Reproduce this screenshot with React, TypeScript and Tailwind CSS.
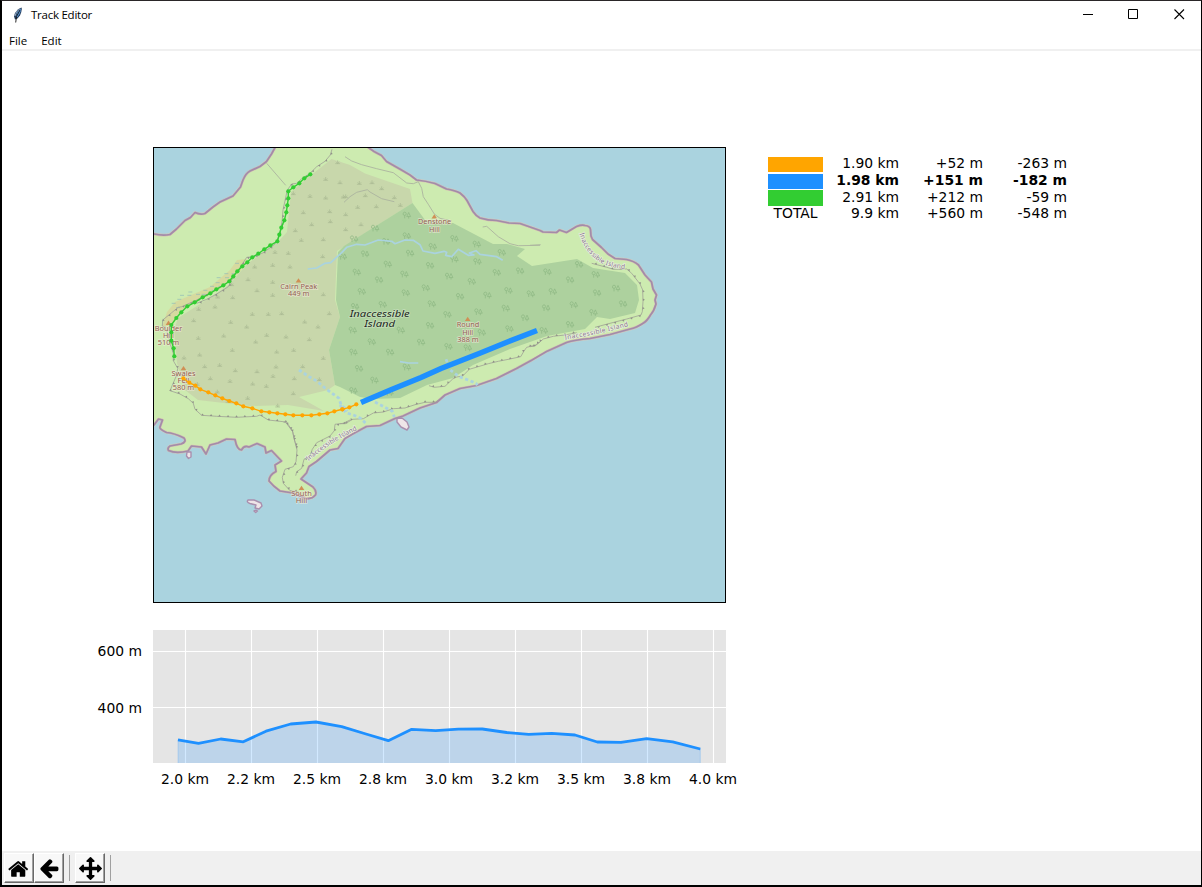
import React from 'react';

type Pt = [number, number];

const pts = (s: string): Pt[] => s.split(' ').map((p) => p.split(',').map(Number) as Pt);

// Marks are stored per survey sheet: three units per map pixel, relative to the sheet's corner.
const sheet = (ox: number, oy: number, s: string): Pt[] =>
  pts(s).map(([x, y]) => [ox + x / 3, oy + y / 3]);

const line = (list: Pt[]) => list.map(([x, y]) => `${x.toFixed(1)},${y.toFixed(1)}`).join(' ');

// Evenly spaced positions along a polyline, each with the direction of its stretch.
const along = (list: Pt[], step: number) => {
  const out: { x: number; y: number; angle: number }[] = [];
  let next = step / 2;
  let done = 0;
  for (let i = 1; i < list.length; i++) {
    const [ax, ay] = list[i - 1];
    const [bx, by] = list[i];
    const len = Math.hypot(bx - ax, by - ay);
    while (next <= done + len) {
      const t = (next - done) / len;
      out.push({ x: ax + (bx - ax) * t, y: ay + (by - ay) * t, angle: (Math.atan2(by - ay, bx - ax) * 180) / Math.PI });
      next += step;
    }
    done += len;
  }
  return out;
};

const ISLAND =
  'M150,234 154,234 Q163,236 170,234.5 L176.5,229 185,220.5 190.5,217.5 195,212.5 Q200,215 205,213.5 L213,207 220,202 233,196 240.5,187 243,180 Q246,173 250,171 L260,166.5 266.5,161.5 271.5,154 277,144 L363,144 369,148 374,151.5 381.5,155.5 386.5,161.5 401.5,170 410,175 416.5,180 Q426,181 435,183.5 L446.5,189 Q455,190.500 460,193 Q465,197 467,200.500 L473,211.500 Q476,216 480,218 Q488,220.500 496.500,220.500 L509,223 520,223.500 540,230.500 543,232 556.500,232.500 559.500,230 566.500,232.500 576.500,226.500 Q582,224.500 585,225.500 Q590,226 590.500,229.500 L591,236 592.500,239.500 601.500,247.500 608,254 615,258.500 626.500,259.500 Q634,261 638.500,265 L645,275 651.500,282 653,289 656.500,295 655,300 656,304 Q654,311 650.500,315 Q647,321 643.500,323 Q636,328 630,329 L610,334.500 590,338.500 Q574,340 566.500,342.500 L546.500,351.500 532,360 516.500,368.500 496.500,378.500 476.500,385.500 460,388.500 445,395 436.500,402.500 420,408 403,416 395,418.500 380,425.500 366.500,426.500 353.500,433.500 345,438.500 338,448.500 330,450 316.500,461.500 309,466.500 306.500,473 301,479 313,487 Q317,491 315.500,495 Q311,500 305,498 L293,493 280,491 Q273,486 269,481 Q269,475 276,471.500 L275,465 281.500,461 271.500,450.500 266,453 265,447 257,443.500 249,447 Q244,445 241.500,450 Q237,450 235,439.500 L226.500,439 218,443 210,445 206,454 201.500,447 191.500,446 188,451 Q176,454 168.500,450.500 Q167,448 170,446 L181,444 Q187,442 184,438 Q174,433 166.500,432.500 Q159,429 160,427 L162.500,420 158.500,419 154,425 150,425 Z';

const SCRUB =
  '331.5,159 350,165 365,173.5 410,189 412.5,203 337,251 335,300 340,317 329,350 335,385 328,390 299,397 324,411 288,405 250,406 198,400 185,390 177,363 174,330 178,318 208,299 230,284 247,264 277,243 287,232 291,192 310,176';

const FOREST =
  '412.5,203 344,246 338,252 336,300 340,317 329,350 335,385 340,387 360,397 373,399 400,398 427,385 453,378 473,365 510,349 547,336 585,329 597,317 610,319 635,313 639,300 637,285 625,273 593,268 577,259 532,266 517,256 525,249 507,244 493,244 453,223 425,220';

const TREES: Pt[] = [
  ...sheet(340, 140, '200,226 105,265 42,297 138,305 200,288 343,296 278,320 410,313 485,338 75,342 8,350 210,340 343,358 412,365 143,373 270,377 50,397 193,403 327,409 470,398 540,393 117,420 395,425 257,444 65,455 505,452 197,459 442,466 360,470 572,462'),
  ...sheet(340, 290, '45,50 128,44 275,42 497,55 322,74 415,66 555,84 270,107 38,121 182,121 508,117 425,128 95,156 243,157 325,170 383,174 40,187 150,187 57,236 200,232 103,271 40,302 148,308'),
  ...sheet(530, 200, '147,194 52,216 197,224 120,240 258,265 68,275 201,279 279,312 131,315 48,324 190,338 120,374 41,392'),
];

const BUSHES: Pt[] = [
  ...sheet(150, 140, '563,67 527,117 570,127 430,160 480,168 527,173 587,169 460,217 539,214 587,223 485,253 541,244 436,271 587,268 454,300 520,298 375,336 415,339 518,349 314,380 368,375 420,380 294,418 368,426 245,433 321,451 203,470 248,472 368,465 520,463'),
  ...sheet(340, 140, '58,129 96,127 125,145 10,170 76,166 163,172 53,201 109,199 181,195 63,253'),
  ...sheet(150, 290, '146,57 195,50 307,72 355,72 395,70 538,70 131,91 242,96 464,95 504,110 290,110 350,135 408,140 478,148 221,137 145,144 317,155 247,180 380,185 431,180 149,194 520,204 102,203 209,225 164,229 256,241 321,244 378,230 458,229 369,258 508,268 240,273 308,281 433,265 181,265 202,305 349,288 142,282 293,324 430,310 234,333 383,347'),
];

const CLIFFS: Pt[][] = [
  sheet(150, 140, '546,28 541,45 525,64 500,80 480,100 455,116 440,130 425,132 412,150 405,182 399,210 397,237 394,260 385,292 375,312 340,338 310,350 290,352 275,375 250,412 235,440 200,462 170,478 140,490'),
  sheet(150, 290, '180,8 140,30 95,50 85,52 65,68 38,90 37,108 50,120 60,160 70,190 70,212 83,235 80,255 60,302 90,312 115,326 130,340 135,358 155,376 200,379 260,382 320,379 330,375 355,390 400,395 410,396 428,425 432,445 441,475'),
  sheet(150, 400, '400,66 408,68 428,95 432,115 441,150 438,185 430,200 405,208 397,232 400,250 420,272 445,275'),
  sheet(150, 400, '600,60 580,70 555,73 553,92 540,108 500,128 487,148 480,168 462,178 455,205 440,215 437,227'),
  sheet(340, 290, '267,287 283,292 315,289 338,267 350,261 368,258 388,238 445,221 475,214 510,207 542,200 552,183 560,172 585,166 600,156'),
  sheet(340, 290, '0,401 16,401 38,388 70,386 100,369 130,366 160,356 195,354 225,344 255,337 285,337 295,331'),
  sheet(530, 200, '0,440 15,438 25,430 40,417 70,409 105,405 140,398'),
  sheet(530, 200, '185,190 230,202 250,208 290,207 305,220 330,252 338,270 339,305 337,335 333,345 290,357 240,370 195,382'),
];

const PATHS: Pt[][] = [
  sheet(150, 140, '350,70 407,136'),
  sheet(340, 140, '15,50 35,63 65,74 110,86 160,98 200,129 220,131 235,125 245,145 250,170 265,193 283,222 300,235 335,243'),
  sheet(340, 140, '12,187 30,170 50,157 82,149 90,156 125,176 163,185'),
  sheet(340, 140, '428,261 440,259 475,290 510,311 535,317 600,316'),
  sheet(530, 200, '0,136 32,134'),
];

const STREAMS: Pt[][] = [
  sheet(340, 140, '-97,387 -70,384 -45,370 -28,368 -8,350 5,338 20,322 50,313 75,315 115,300 155,304 165,311 195,300 220,301 240,314 249,333 285,340 312,334 320,337 317,346 335,350 355,328 385,346 402,345 388,339 408,332 420,343 470,350 488,361'),
  sheet(340, 290, '180,215 205,219 235,219'),
];

const SEASONAL: Pt[][] = [
  sheet(150, 290, '447,240 480,262 500,273 525,294 545,309 567,325 573,344 592,363'),
  sheet(340, 290, '0,345 18,368 40,375 62,385 80,403'),
  sheet(340, 290, '318,208 331,240 358,260 390,272 408,280 412,286'),
  sheet(340, 290, '105,336 137,353 157,364 163,381'),
];

const GREEN: Pt[] = [
  ...sheet(150, 140, '481,103 463,115 448,130 430,142 415,154 415,175 412,196 409,217 403,241 394,263 388,284 382,304 361,316 343,328 325,341 307,352 292,367 277,379 262,394 250,409 238,424 220,436 199,448 181,460 158,472'),
  ...sheet(150, 290, '134,37 112,49 94,67 79,84 64,105 64,127 64,152 71,175 73,199'),
];

const ORANGE: Pt[] = [
  ...sheet(150, 290, '100,265 118,278 136,287 151,298 175,307 196,316 217,325 238,333 259,340 280,349 307,355 334,364 358,367 382,370 406,373 430,376 457,376 484,376 508,373 532,370 553,364 577,358'),
  ...sheet(340, 290, '7,358 28,352 49,343'),
];

const ELEVATION =
  '178,739.8 198.5,743.4 220.7,739 243.3,741.8 266,731.2 290.7,724 316,722 341.7,726.7 366,734 388.3,740.7 411.7,729.3 435.7,730.7 458.3,729.2 482.3,729 506.7,732.5 528.7,734.4 551.7,733.4 575,735 597.3,742 621,742.3 646.7,738.7 672.7,741.8 700.3,749';

const SEGMENTS = [
  { swatch: 'h-[15px] mt-px bg-[#ffa500]', text: '', cells: ['1.90 km', '+52 m', '-263 m'], row: 'h-[17px]' },
  { swatch: 'h-[15px] mt-px bg-[#1e90ff]', text: '', cells: ['1.98 km', '+151 m', '-182 m'], row: 'h-[17px] font-bold' },
  { swatch: 'h-[16px] bg-[#32cd32]', text: '', cells: ['2.91 km', '+212 m', '-59 m'], row: 'h-4' },
  { swatch: 'h-4 -mt-px', text: 'TOTAL', cells: ['9.9 km', '+560 m', '-548 m'], row: 'h-4' },
];

const X_TICKS = ['2.0 km', '2.2 km', '2.5 km', '2.8 km', '3.0 km', '3.2 km', '3.5 km', '3.8 km', '4.0 km'];

function Label({ x, y, w, children }: { x: number; y: number; w: number; children: string }) {
  return (
    <text
      x={x}
      y={y}
      textLength={w}
      lengthAdjust="spacingAndGlyphs"
      textAnchor="middle"
      fontSize="6.6"
      fill="#935f52"
      stroke="#f3ecdf"
      strokeOpacity="0.6"
      strokeWidth="1.3"
      paintOrder="stroke"
    >
      {children}
    </text>
  );
}

function Peak({ x, y }: { x: number; y: number }) {
  return <path d={`M${x},${y - 2.3} l2.8,4.4 h-5.6 z`} fill="#d08f55" />;
}

function Cliff({ points }: { points: Pt[] }) {
  return (
    <g fill="none" stroke="#9fa195">
      <polyline points={line(points)} strokeWidth="0.8" />
      {along(points, 8.5).map((p, i) => (
        <path
          key={i}
          d="M-1.300,0 h2.600 l-1.300,-2 z"
          transform={`translate(${p.x.toFixed(1)} ${p.y.toFixed(1)}) rotate(${p.angle.toFixed(0)})`}
          fill="#8f9188"
          stroke="none"
        />
      ))}
    </g>
  );
}

function Track({ points, color }: { points: Pt[]; color: string }) {
  return (
    <g>
      <polyline points={line(points)} fill="none" stroke={color} strokeWidth="1.4" />
      {points.map(([x, y], i) => (
        <circle key={i} cx={x} cy={y} r="2.1" fill={color} />
      ))}
    </g>
  );
}

function IslandMap() {
  return (
    <svg className="block h-[456px] w-[573px]" viewBox="153 147 573 456" fontFamily="'Noto Sans', sans-serif">
      <defs>
        <path id="east-label" d="M579.500,233.500 Q583,247 594,258 Q605,267.500 627,269" />
        <path id="south-label" d="M565,339.500 Q598,335 632,325" />
        <path id="bay-label" d="M308.500,461 Q329,443 359,429" />
        <clipPath id="island-area">
          <path d={ISLAND} />
        </clipPath>
      </defs>
      <rect x="153" y="147" width="573" height="456" fill="#aad3df" />
      <path d={ISLAND} fill="#cdebb0" />
      <g clipPath="url(#island-area)">
        <path d="M175,302 L210,287 230,270 237,260 247,259 240,272 222,288 190,304 179,315 172,325 162,327 167,312z" fill="#d6da9f" />
        <polygon points={SCRUB} fill="#c8d7ab" />
        <polygon points={FOREST} fill="#add19e" />
      </g>
      <g stroke="#94bcb8" strokeWidth="0.7">
        {sheet(150, 140, '255,370 223,401 245,401 200,413 225,413 197,428 180,439 205,439 160,451 185,451 138,463 155,463').map(([x, y], i) => (
          <path key={i} d={`M${x},${y} h4`} />
        ))}
        {sheet(150, 290, '115,6 90,16 112,16 82,28 65,40 78,53').map(([x, y], i) => (
          <path key={i} d={`M${x},${y} h4`} />
        ))}
      </g>
      <path d={ISLAND} fill="none" stroke="#f0d9b6" strokeOpacity="0.6" strokeWidth="3" strokeLinejoin="round" />
      <path d={ISLAND} fill="none" stroke="#a48ba9" strokeOpacity="0.35" strokeWidth="2.600" strokeLinejoin="round" />
      <path d={ISLAND} fill="none" stroke="#a48ba9" strokeWidth="1.7" strokeLinejoin="round" />
      <g fill="#eee5e8" stroke="#a98fae" strokeWidth="1.4" strokeLinejoin="round">
        <path d="M397,418.500 L402,418 407,422 409,427 407,430 401,427 397,422z" />
        <path d="M248,500 Q246,502 250,503.500 L256,505 255,508 259,509 262,506 261,503 254,500z" />
        <path d="M254,511 l2,-.8 1.500,.8 -1.800,1.500z" />
        <path d="M187,452 L186.500,456 188.500,458.500 191,457 191,452z" />
      </g>

      {BUSHES.map(([x, y], i) => (
        <path
          key={i}
          d={`M${x - 2.4},${y + 1.3} h4.800 M${x},${y + 1} v-3 M${x},${y + 1.2} l-1.7,-1.800 M${x},${y + 1.2} l1.7,-1.800`}
          fill="none"
          stroke="#a9b992"
          strokeWidth="0.7"
        />
      ))}
      {TREES.map(([x, y], i) => (
        <g key={i} fill="none" stroke="#8ab581" strokeWidth="0.65">
          <path d={`M${x - 2},${y + 3} v-3 q-1.700,0 -1.600,-1.400 q.2,-1.800 1.600,-1.800 q1.500,0 1.600,1.800 q0,1.400 -1.600,1.400`} />
          <path d={`M${x + 2},${y + 3.200} v-2 h-1.900 l1.900,-4 1.900,4 h-1.900`} />
        </g>
      ))}
      {PATHS.map((p, i) => (
        <polyline key={i} points={line(p)} fill="none" stroke="#abb39f" strokeWidth="0.9" />
      ))}
      {CLIFFS.map((p, i) => (
        <Cliff key={i} points={p} />
      ))}
      {STREAMS.map((p, i) => (
        <polyline key={i} points={line(p)} fill="none" stroke="#aad3df" strokeWidth="1.7" strokeLinejoin="round" />
      ))}
      {SEASONAL.map((p, i) => (
        <polyline key={i} points={line(p)} fill="none" stroke="#aad3df" strokeWidth="2.8" strokeDasharray="3.200 2.600" />
      ))}

      <Peak x={298.5} y={280.5} />
      <Label x={298.7} y={288.700} w={37}>Cairn Peak</Label>
      <Label x={298.7} y={295.600} w={21.500}>449 m</Label>
      <Peak x={434.300} y={216.500} />
      <Label x={434.500} y={224.400} w={33}>Denstone</Label>
      <Label x={434.500} y={231.500} w={11}>Hill</Label>
      <Peak x={467.700} y={319} />
      <Label x={468} y={327.300} w={22.500}>Round</Label>
      <Label x={467.700} y={334.600} w={11}>Hill</Label>
      <Label x={468} y={341.700} w={21.500}>388 m</Label>
      <Peak x={168.500} y={322.800} />
      <Label x={168.500} y={331} w={27.500}>Boulder</Label>
      <Label x={168.500} y={338} w={11}>Hill</Label>
      <Label x={168.500} y={345} w={21.500}>510 m</Label>
      <Peak x={183.500} y={368.200} />
      <Label x={183.500} y={376.300} w={24}>Swales</Label>
      <Label x={183.500} y={383.300} w={12}>Fell</Label>
      <Label x={183.500} y={390.300} w={21.500}>580 m</Label>
      <Peak x={301.500} y={488} />
      <Label x={301.500} y={496.300} w={20.500}>South</Label>
      <Label x={301.500} y={503.300} w={11.500}>Hill</Label>

      <g fontSize="6.6" fill="#8d7896" stroke="#f5f3f0" strokeOpacity="0.65" strokeWidth="1.4" paintOrder="stroke">
        <text><textPath href="#east-label" textLength="62" lengthAdjust="spacing">Inaccessible Island</textPath></text>
        <text><textPath href="#south-label" textLength="65" lengthAdjust="spacing">Inaccessible Island</textPath></text>
        <text><textPath href="#bay-label" textLength="58" lengthAdjust="spacing">Inaccessible Island</textPath></text>
      </g>
      <g
        fontSize="9"
        fontStyle="italic"
        fill="#1d281d"
        stroke="#dcebd5"
        strokeOpacity="0.5"
        strokeWidth="1.4"
        paintOrder="stroke"
        textAnchor="middle"
      >
        <text x="379.700" y="316.500" textLength="60" lengthAdjust="spacingAndGlyphs">Inaccessible</text>
        <text x="379.700" y="327.200" textLength="31" lengthAdjust="spacingAndGlyphs">Island</text>
      </g>

      <Track points={GREEN} color="#32cd32" />
      <Track points={ORANGE} color="#ffa500" />
      <polyline
        points="361,402.500 391,389.700 421,377.500 441,368.500 481,352.700 508,341.800 537,330.500"
        fill="none"
        stroke="#1e90ff"
        strokeWidth="5.500"
      />
      <rect x="153.500" y="147.500" width="572" height="455" fill="none" stroke="#000" />
    </svg>
  );
}

function ElevationChart() {
  return (
    <svg className="block h-[133px] w-[573px]" viewBox="153 630 573 133">
      <rect x="153" y="630" width="573" height="133" fill="#e5e5e5" />
      <g stroke="#fff" strokeWidth="1.1">
        {X_TICKS.map((t, i) => (
          <path key={t} d={`M${185.5 + i * 66},630 v133`} />
        ))}
        <path d="M153,651.500 h573 M153,707.500 h573" />
      </g>
      <polygon points={`178,765 ${ELEVATION} 700.3,765`} fill="#1e90ff" fillOpacity="0.2" stroke="#1e90ff" strokeOpacity="0.2" />
      <polyline points={ELEVATION} fill="none" stroke="#1e90ff" strokeWidth="2.800" strokeLinejoin="round" />
    </svg>
  );
}

function ToolButton({ path, icon }: { path: string; icon: string }) {
  return (
    <button className="flex h-[30px] w-[30px] items-center justify-center border border-t-white border-r-[#696969] border-b-[#696969] border-l-white bg-[#f8f8f8] shadow-[inset_-1px_-1px_0_#a0a0a0]">
      <svg className={icon} viewBox="0 0 1792 1792" fill="#000">
        <path d={path} />
      </svg>
    </button>
  );
}

const HOME =
  'M1408 992v480q0 26-19 45t-45 19h-384v-384h-256v384h-384q-26 0-45-19t-19-45v-480q0-1 .5-3t.5-3l575-474 575 474q1 2 1 6zm223-69l-62 74q-8 9-21 11h-3q-13 0-21-7l-692-577-692 577q-12 8-24 7-13-2-21-11l-62-74q-8-10-7-23.5t11-21.5l719-599q32-26 76-26t76 26l244 204v-195q0-14 9-23t23-9h192q14 0 23 9t9 23v408l219 182q10 8 11 21.5t-7 23.5z';
const BACK =
  'M1664 896v128q0 53-32.5 90.5t-84.5 37.5h-704l293 294q38 36 38 90t-38 90l-75 76q-37 37-90 37-52 0-91-37l-651-652q-37-37-37-90 0-52 37-91l651-650q38-38 91-38 52 0 90 38l75 74q38 38 38 91t-38 91l-293 293h704q52 0 84.5 37.5t32.5 90.5z';
const MOVE =
  'M1792 896q0 26-19 45l-256 256q-19 19-45 19t-45-19-19-45v-128h-384v384h128q26 0 45 19t19 45-19 45l-256 256q-19 19-45 19t-45-19l-256-256q-19-19-19-45t19-45 45-19h128v-384h-384v128q0 26-19 45t-45 19-45-19l-256-256q-19-19-19-45t19-45l256-256q19-19 45-19t45 19 19 45v128h384v-384h-128q-26 0-45-19t-19-45 19-45l256-256q19-19 45-19t45 19l256 256q19 19 19 45t-19 45-45 19h-128v384h384v-128q0-26 19-45t45-19 45 19l256 256q19 19 19 45z';

export default function App() {
  return (
    <div className="flex h-[887px] w-[1202px] flex-col overflow-hidden border-t border-r border-b-2 border-l-2 border-t-[#2a2628] border-r-black border-b-black border-l-black bg-white font-['Open_Sans',sans-serif] text-[11.5px] text-black">
      <header className="flex h-[28px] shrink-0 items-center">
        <svg className="ml-[10px] h-4 w-[11px]" viewBox="0 0 11 16">
          <path d="M9.500,.5 L6,2.200 3,6 2,9.500 3,12.500 5.500,11.500 8,8.500 9.300,5 9.800,2z" fill="#223b5c" />
          <path d="M8.800,1.200 L5.500,5 4,10.500 5.500,10 7.500,7 8.800,4z" fill="#5795d5" />
          <path d="M7.500,2 L4.500,5 3,9" fill="none" stroke="#b8cce0" strokeWidth="0.8" />
          <path d="M8,3 L4.500,9.500 3.700,15.500" fill="none" stroke="#111" strokeWidth="0.9" />
        </svg>
        <span className="ml-2 tracking-[-0.25px]">Track Editor</span>
        <svg className="mr-[16px] mb-px ml-auto h-[11px] w-[102px]" viewBox="0 0 102 11" fill="none" stroke="#000">
          <path d="M0,5.500 h10 M45.500,.5 h9 v9 h-9z" />
          <path d="M91.500,.5 l9.500,9.500 M101,.5 l-9.500,9.500" strokeWidth="1.100" />
        </svg>
      </header>
      <nav className="flex h-[22px] shrink-0 items-center gap-[14px] border-b-2 border-[#f0f0f0] pt-1 pl-[7px]">
        <span>File</span>
        <span>Edit</span>
      </nav>

      <main className="flex h-[800px] shrink-0 pt-[96px] font-['DejaVu_Sans',sans-serif] text-[13.89px] leading-4">
        <div className="flex w-[766px] flex-col">
          <div className="pl-[151px]">
            <IslandMap />
          </div>
          <div className="mt-[27px] flex">
            <div className="flex w-[151px] flex-col gap-[41px] pt-[13px] pr-[11px] text-right">
              <span>600 m</span>
              <span>400 m</span>
            </div>
            <ElevationChart />
          </div>
          <div className="mt-2 flex pl-[150px] text-center">
            {X_TICKS.map((t) => (
              <span key={t} className="w-[66px] shrink-0">{t}</span>
            ))}
          </div>
        </div>
        <div className="flex flex-col pt-[9px]">
          {SEGMENTS.map((s) => (
            <div key={s.cells[0]} className={`flex ${s.row}`}>
              <div className={`w-[55px] text-center ${s.swatch}`}>{s.text}</div>
              <span className="-mt-px w-[76px] text-right">{s.cells[0]}</span>
              <span className="-mt-px w-[84px] text-right">{s.cells[1]}</span>
              <span className="-mt-px w-[84px] text-right">{s.cells[2]}</span>
            </div>
          ))}
        </div>
      </main>

      <footer className="flex h-[34px] shrink-0 items-start bg-[#f0f0f0] pt-[2px] pl-[2px]">
        <ToolButton path={HOME} icon="mt-px h-[22px] w-[22px]" />
        <ToolButton path={BACK} icon="h-[22px] w-[22px]" />
        <div className="mt-[2px] ml-[5px] h-[26px] w-px bg-[#a0a0a0]" />
        <div className="ml-[5px]">
          <ToolButton path={MOVE} icon="h-[23px] w-[23px]" />
        </div>
        <div className="mt-[2px] ml-[5px] h-[26px] w-px bg-[#a0a0a0]" />
      </footer>
    </div>
  );
}
